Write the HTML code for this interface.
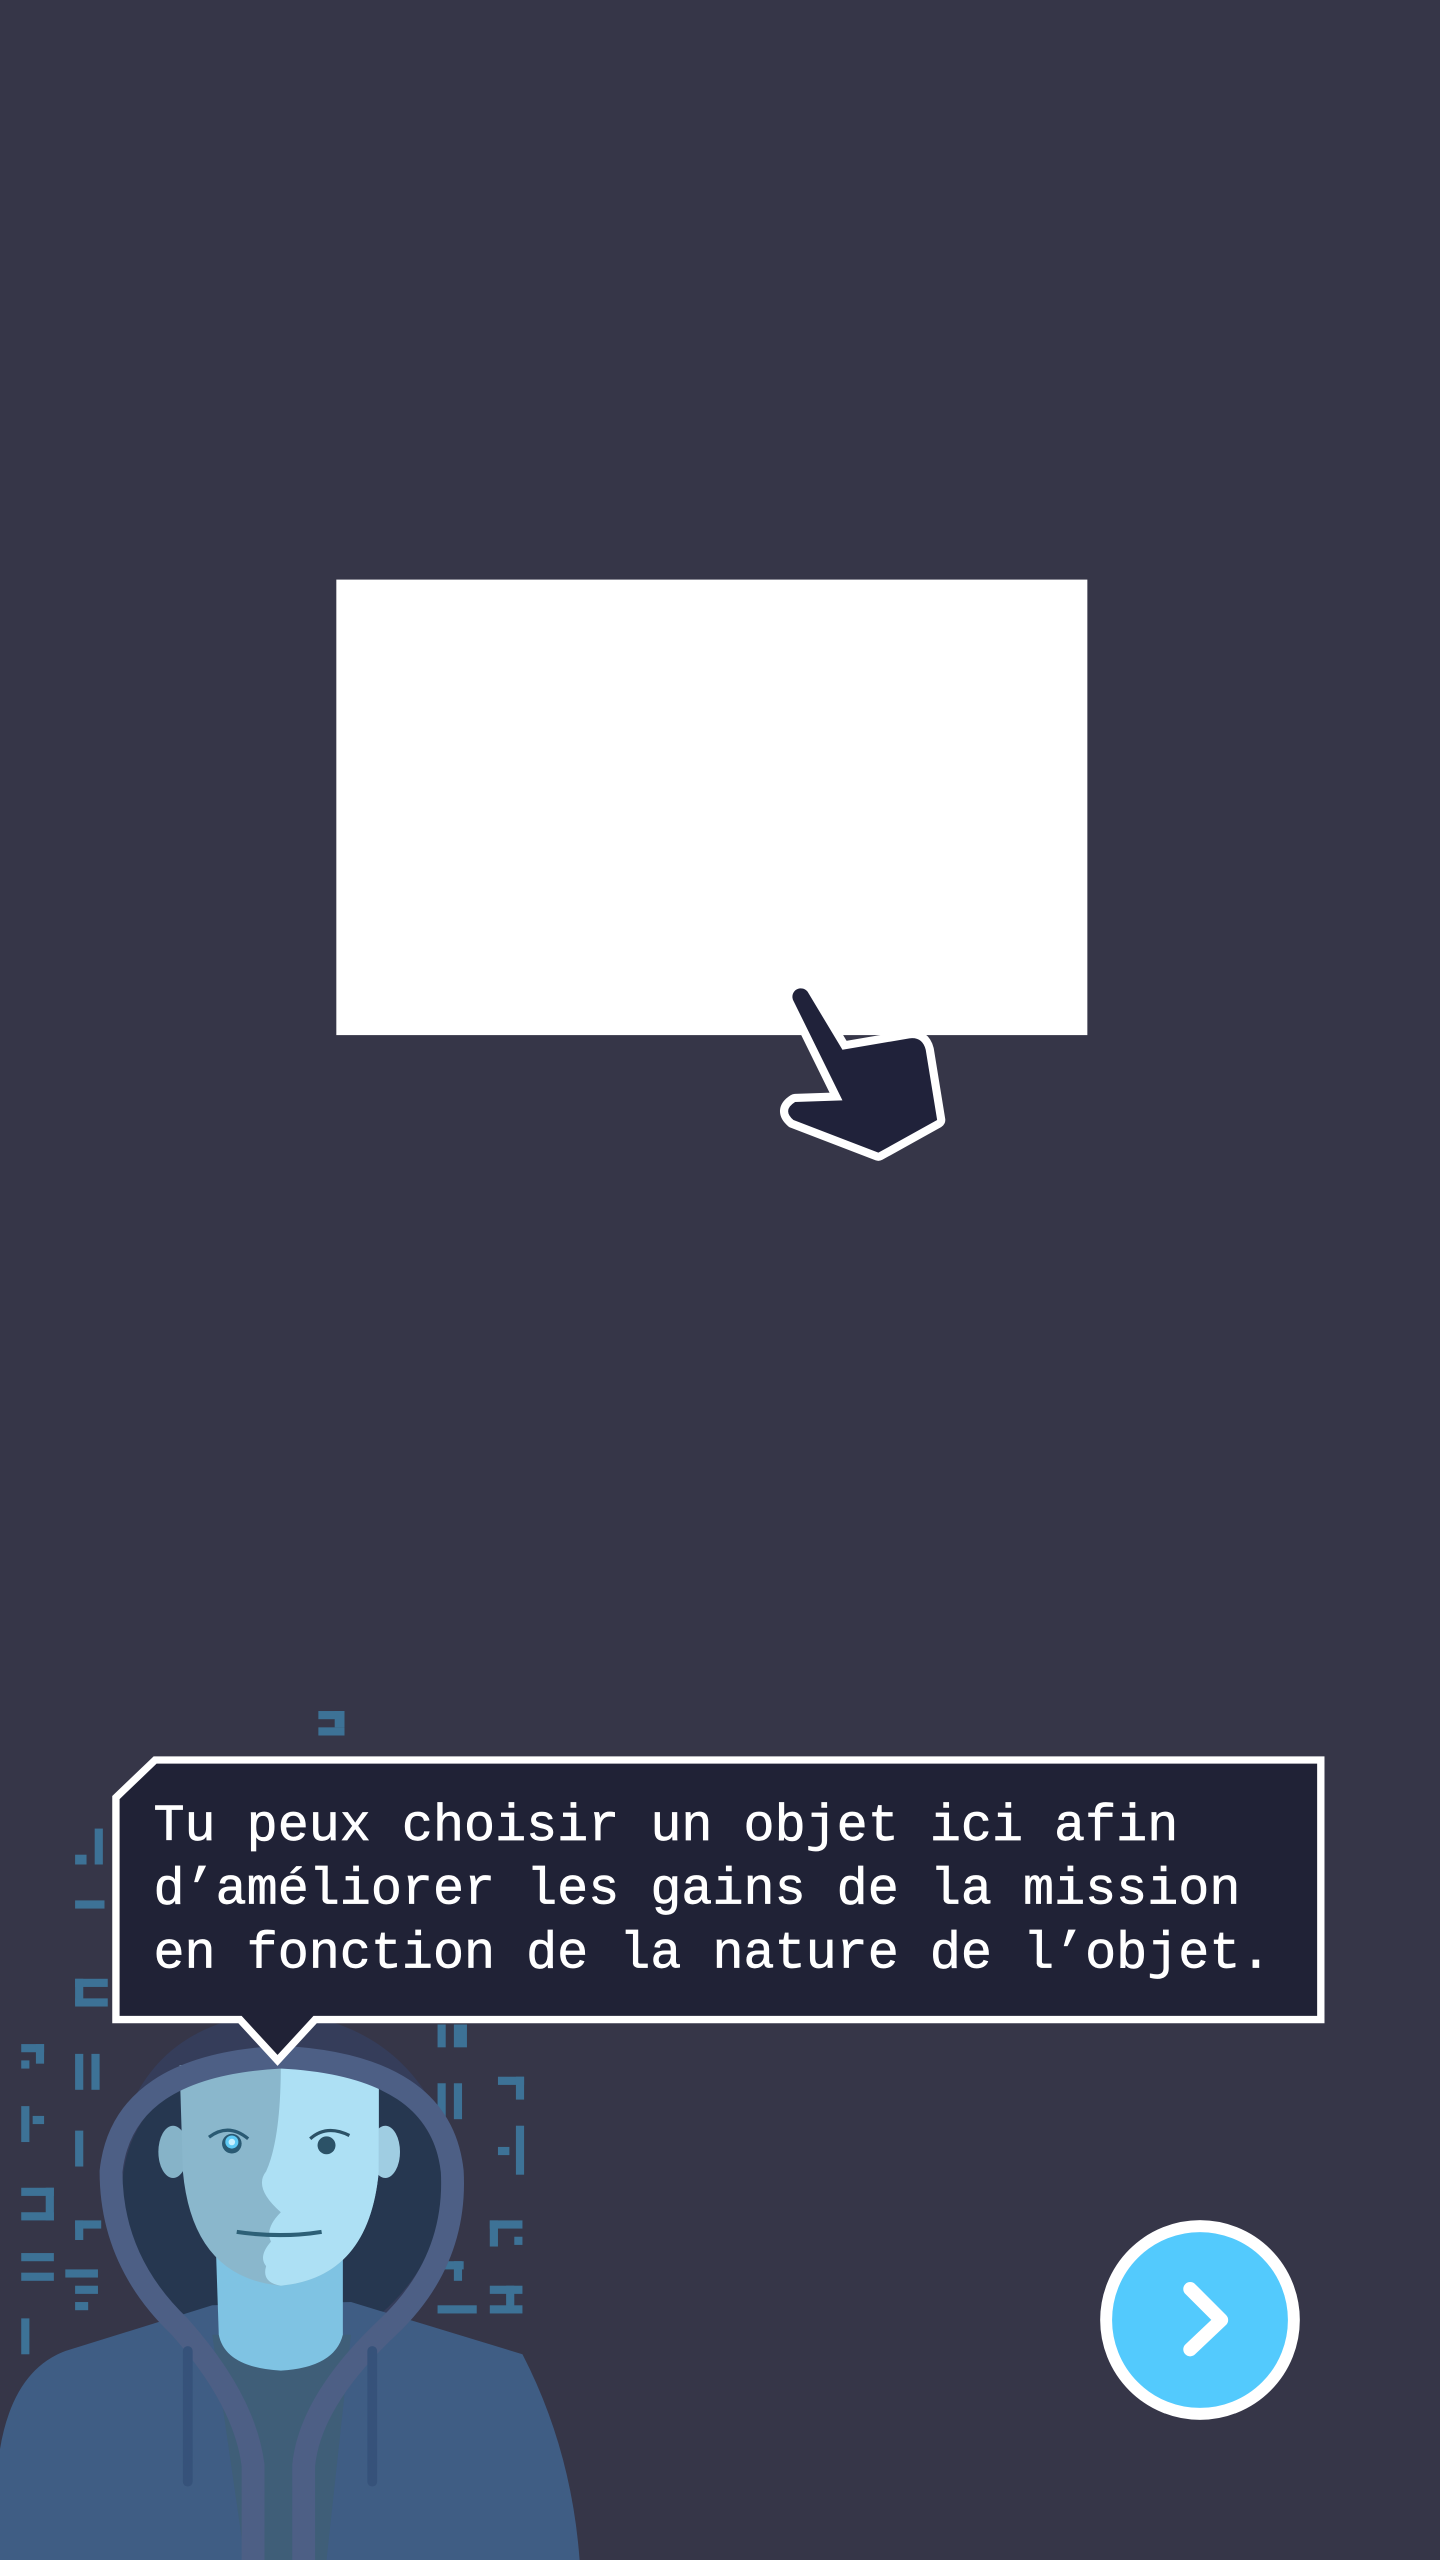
<!DOCTYPE html>
<html><head><meta charset="utf-8"><style>
html,body{margin:0;padding:0;background:#363648;width:1440px;height:2560px;overflow:hidden}
svg{display:block}
</style></head><body>
<svg width="1440" height="2560" viewBox="0 0 882 1568" xmlns="http://www.w3.org/2000/svg">
<defs>
<path id="hand" d="M486,613 A4.8,4.8 0 0 1 495,608 L516,643 L557,636 Q565,635 567,643 L574,686 L538,706 L486,686 Q479,680 487,675 L516,674 Z"/>
</defs>
<rect width="882" height="1568" fill="#363648"/>
<rect x="206" y="355" width="460" height="279" fill="#ffffff"/>
<use href="#hand" fill="#ffffff" stroke="#ffffff" stroke-width="10" stroke-linejoin="round"/>
<use href="#hand" fill="#20223a"/>

<g fill="#3d7296">
<rect x="195" y="1048" width="16" height="5"/><rect x="205" y="1048" width="6" height="10"/><rect x="195" y="1058" width="16" height="5"/>
<rect x="58" y="1120" width="5" height="22"/><rect x="46" y="1136" width="7" height="6"/>
<rect x="46" y="1164" width="18" height="5"/>
<rect x="46" y="1212" width="20" height="5"/><rect x="46" y="1212" width="5" height="16"/><rect x="46" y="1224" width="20" height="5"/>
<rect x="13" y="1252" width="14" height="5"/><rect x="22" y="1252" width="5" height="12"/><rect x="13" y="1262" width="5" height="5"/>
<rect x="46" y="1258" width="5" height="22"/><rect x="56" y="1258" width="5" height="22"/>
<rect x="13" y="1290" width="5" height="22"/><rect x="20" y="1296" width="7" height="5"/>
<rect x="46" y="1305" width="5" height="22"/>
<rect x="13" y="1340" width="20" height="5"/><rect x="28" y="1340" width="5" height="20"/><rect x="13" y="1355" width="20" height="5"/>
<rect x="46" y="1360" width="16" height="5"/><rect x="46" y="1360" width="5" height="12"/>
<rect x="13" y="1380" width="20" height="5"/><rect x="13" y="1392" width="20" height="5"/>
<rect x="40" y="1390" width="20" height="5"/><rect x="46" y="1400" width="14" height="5"/><rect x="46" y="1410" width="8" height="5"/>
<rect x="13" y="1420" width="5" height="22"/>
<rect x="268" y="1240" width="5" height="14"/><rect x="278" y="1240" width="8" height="14"/>
<rect x="268" y="1276" width="5" height="22"/><rect x="278" y="1276" width="5" height="22"/>
<rect x="305" y="1272" width="16" height="5"/><rect x="316" y="1272" width="5" height="14"/>
<rect x="316" y="1302" width="5" height="30"/><rect x="305" y="1315" width="7" height="5"/>
<rect x="300" y="1360" width="20" height="5"/><rect x="300" y="1360" width="5" height="16"/><rect x="315" y="1370" width="5" height="5"/>
<rect x="268" y="1385" width="16" height="5"/><rect x="278" y="1385" width="5" height="12"/>
<rect x="300" y="1400" width="20" height="5"/><rect x="310" y="1400" width="5" height="16"/><rect x="300" y="1412" width="20" height="5"/>
<rect x="268" y="1412" width="24" height="5"/>
</g>

<path d="M70,1330 Q80,1240 170,1232 Q260,1240 280,1330 Q285,1390 240,1420 L110,1420 Q62,1390 70,1330 Z" fill="#353d5a"/>
<path d="M75,1335 Q82,1268 170,1262 Q262,1268 272,1335 Q272,1385 230,1420 L115,1420 Q73,1385 75,1335 Z" fill="#263750"/>
<path d="M0,1568 L0,1500 Q8,1452 40,1440 L130,1412 L215,1410 L320,1442 Q350,1500 355,1568 Z" fill="#3f5d84"/>
<path d="M130,1430 L215,1430 L200,1568 L150,1568 Z" fill="#3f5e78"/>
<path d="M132,1370 L210,1370 L210,1430 Q205,1450 172,1452 Q138,1450 134,1430 Z" fill="#7fc3e3"/>
<ellipse cx="106" cy="1318" rx="9" ry="16" fill="#86b3c8"/>
<ellipse cx="236" cy="1318" rx="9" ry="16" fill="#9fcde2"/>
<path d="M110,1265 L232,1265 L232,1330 Q226,1395 172,1400 Q118,1395 112,1330 Z" fill="#8ab7cc"/>
<path d="M172,1265 L232,1265 L232,1330 Q226,1395 172,1400 Q160,1398 163,1388 Q158,1382 166,1373 Q162,1365 172,1355 Q155,1340 163,1330 Q172,1310 172,1265 Z" fill="#ade0f4"/>
<circle cx="142" cy="1313" r="6" fill="#2a5a73"/><circle cx="142" cy="1312" r="4" fill="#5ecaf5"/><circle cx="142" cy="1312" r="2" fill="#c7f0ff"/>
<circle cx="200" cy="1314" r="5.5" fill="#2c5267"/>
<path d="M128,1309 Q140,1300 152,1310" stroke="#2a5a73" stroke-width="2" fill="none"/>
<path d="M190,1310 Q200,1301 214,1308" stroke="#2c5267" stroke-width="2" fill="none"/>
<path d="M145,1367 Q172,1371 197,1367" stroke="#2d6077" stroke-width="2.5" fill="none"/>
<path d="M155,1568 L155,1510 Q150,1470 110,1425 Q68,1385 68,1330 Q75,1265 172,1260 Q270,1265 277,1330 Q280,1385 238,1425 Q190,1470 186,1510 L186,1568" stroke="#4d5f85" stroke-width="14" fill="none"/>
<path d="M115,1440 L115,1520" stroke="#36527a" stroke-width="6" stroke-linecap="round"/>
<path d="M228,1440 L228,1520" stroke="#36527a" stroke-width="6" stroke-linecap="round"/>

<path d="M95,1078 L809,1078 L809,1237 L193,1237 L170,1262 L147,1237 L71,1237 L71,1101 Z" fill="#202236" stroke="#ffffff" stroke-width="4.5"/>
<g font-family="'Liberation Mono', monospace" font-size="31.7" fill="#ffffff" stroke="#ffffff" stroke-width="0.4">
<text x="94" y="1127">Tu peux choisir un objet ici afin</text>
<text x="94" y="1166">d’améliorer les gains de la mission</text>
<text x="94" y="1205">en fonction de la nature de l’objet.</text>
</g>

<circle cx="735" cy="1421" r="57.5" fill="#53cafd" stroke="#ffffff" stroke-width="7.3"/>
<path d="M729,1402 L748,1421 L729,1439" stroke="#ffffff" stroke-width="8.5" fill="none" stroke-linecap="round" stroke-linejoin="round"/>
</svg>
</body></html>
